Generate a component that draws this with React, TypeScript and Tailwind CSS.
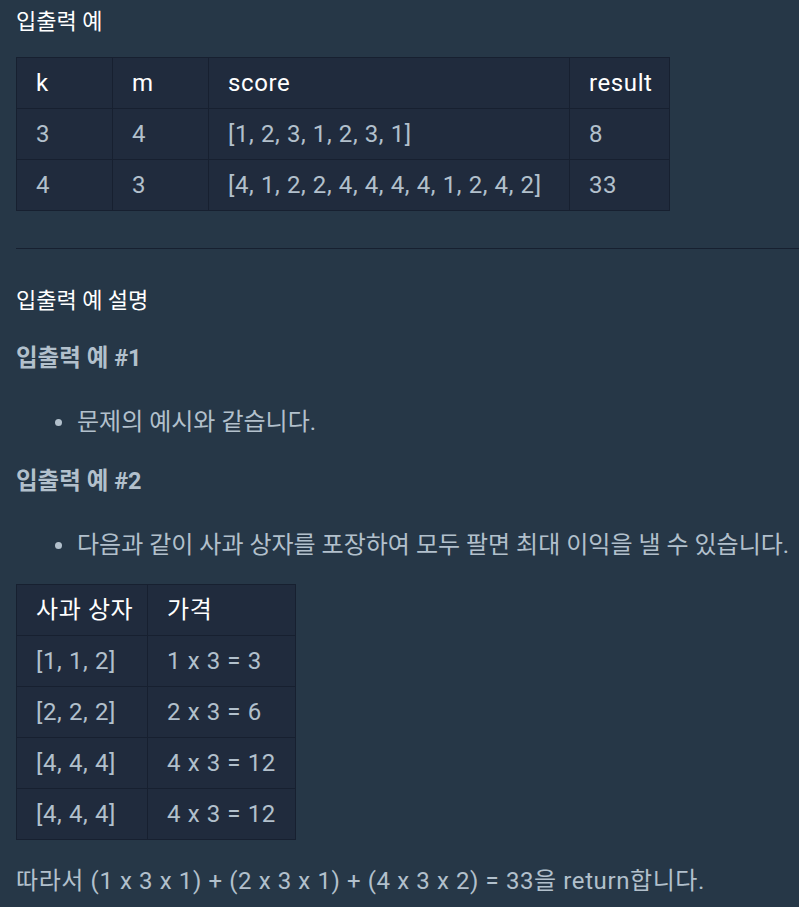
const font = "font-['Roboto','Noto_Sans_CJK_KR',sans-serif]";

const cell = 'whitespace-nowrap border border-[#172030] px-[19px] py-[9px] text-left align-middle leading-[32px] tracking-[0.6px]';

function DataTable({ head, rows, widths, width }: { head: string[]; rows: string[][]; widths: string[]; width: string }) {
  return (
    <table className={`table-fixed border-collapse bg-[#202b3d] ${width}`}>
      <colgroup>
        {widths.map((w, i) => (
          <col key={i} className={w} />
        ))}
      </colgroup>
      <thead>
        <tr>
          {head.map((h) => (
            <th key={h} className={`${cell} font-normal text-white`}>
              {h}
            </th>
          ))}
        </tr>
      </thead>
      <tbody>
        {rows.map((r, i) => (
          <tr key={i}>
            {r.map((c, j) => (
              <td key={j} className={`${cell} text-[#b2c0cc]`}>
                {c}
              </td>
            ))}
          </tr>
        ))}
      </tbody>
    </table>
  );
}

function Bullet({ children }: { children: React.ReactNode }) {
  return (
    <div className="flex items-center pl-[39px]">
      <span className="mr-[15px] inline-block size-[7px] shrink-0 rounded-full bg-[#b2c0cc]" />
      <span className="shrink-0 whitespace-nowrap">{children}</span>
    </div>
  );
}

export default function App() {
  return (
    <div className={`min-h-screen overflow-hidden bg-[#263747] px-4 pt-[6px] text-[24px] leading-[32px] text-[#b2c0cc] ${font}`}>
      <h5 className="text-[22px] text-white">입출력 예</h5>

      <div className="mt-[19px]">
        <DataTable
          width="w-[653px]"
          head={['k', 'm', 'score', 'result']}
          widths={['w-[96px]', 'w-[96px]', 'w-[361px]', 'w-[100px]']}
          rows={[
            ['3', '4', '[1, 2, 3, 1, 2, 3, 1]', '8'],
            ['4', '3', '[4, 1, 2, 2, 4, 4, 4, 4, 1, 2, 4, 2]', '33'],
          ]}
        />
      </div>

      <hr className="-mr-4 mt-[37px] border-0 border-t border-[#172030]" />

      <h5 className="mt-[36px] text-[22px] text-white">입출력 예 설명</h5>

      <h6 className="mt-[25px] text-[23.5px] font-bold">입출력 예 #1</h6>
      <div className="mt-[32px]">
        <Bullet>문제의 예시와 같습니다.</Bullet>
      </div>

      <h6 className="mt-[27px] text-[23.5px] font-bold">입출력 예 #2</h6>
      <div className="mt-[32px]">
        <Bullet>다음과 같이 사과 상자를 포장하여 모두 팔면 최대 이익을 낼 수 있습니다.</Bullet>
      </div>

      <div className="mt-[23px]">
        <DataTable
          width="w-[279px]"
          head={['사과 상자', '가격']}
          widths={['w-[131px]', 'w-[148px]']}
          rows={[
            ['[1, 1, 2]', '1 x 3 = 3'],
            ['[2, 2, 2]', '2 x 3 = 6'],
            ['[4, 4, 4]', '4 x 3 = 12'],
            ['[4, 4, 4]', '4 x 3 = 12'],
          ]}
        />
      </div>

      <p className="mt-[25px] whitespace-nowrap pb-[9px] tracking-[0.6px]">따라서 (1 x 3 x 1) + (2 x 3 x 1) + (4 x 3 x 2) = 33을 return합니다.</p>
    </div>
  );
}
